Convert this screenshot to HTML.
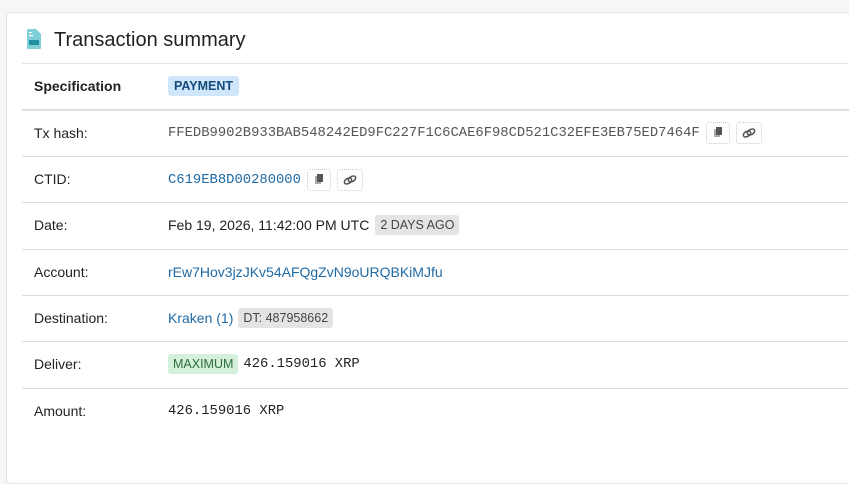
<!DOCTYPE html>
<html><head><style>
body{margin:0;background:#f5f6f8;font-family:"Liberation Sans",sans-serif;width:849px;height:466px;overflow:hidden}
.card{position:absolute;left:6px;top:12px;width:860px;height:470px;background:#fff;border:1px solid #e3e5e8;border-radius:4px}
.title{position:absolute;left:47px;top:16px;font-size:20px;color:#222}
.icon{position:absolute;left:20px;top:16px}
.row{position:absolute;left:15px;width:860px;height:46px;border-top:1px solid #dedede;font-size:14px;color:#222}
.row .l{position:absolute;left:12px;top:14px}
.row .v{position:absolute;left:146px;top:14px;white-space:nowrap;display:flex;align-items:center}
.mono{font-family:"Liberation Mono",monospace;font-size:13.85px}
.link{color:#1f6aa5}
.badge{display:inline-block;font-size:12.5px;padding:3px 5px;border-radius:3px;margin-left:6px}
.btn{display:inline-block;width:22px;height:20px;border:1px dotted #ccc;border-radius:3px;margin-left:6px;position:relative;top:0}
</style></head><body>
<div class="card">
<svg class="icon" width="14" height="20" viewBox="0 0 14 20"><path d="M1 0h8l5 5v14a1 1 0 0 1-1 1H1a1 1 0 0 1-1-1V1a1 1 0 0 1 1-1z" fill="#7fcfd9"/><rect x="2" y="3" width="3" height="1.2" fill="#fff"/><rect x="2" y="6" width="4" height="1.2" fill="#fff"/><rect x="2" y="11" width="10" height="5" fill="#1d8fa0"/></svg>
<div class="title">Transaction summary</div>
<div class="row" style="top:50px;border-top-color:#e6e6e6"><span class="l" style="font-weight:bold">Specification</span><span class="v" style="top:12px"><span class="badge" style="margin-left:0;background:#cfe6fb;color:#154a7c;font-weight:bold;padding:3px 6px">PAYMENT</span></span></div>
<div class="row" style="top:96px;border-top:2px solid #dedede"><span class="l">Tx hash:</span><span class="v" style="top:11px"><span class="mono" style="color:#555">FFEDB9902B933BAB548242ED9FC227F1C6CAE6F98CD521C32EFE3EB75ED7464F</span><span class="btn"><svg width="22" height="20"><rect x="7" y="6" width="6" height="8" fill="#aaa"/><rect x="9" y="4" width="6" height="8" fill="#555"/></svg></span><span class="btn" style="width:24px"><svg width="24" height="20"><ellipse cx="10" cy="11" rx="4" ry="2.5" transform="rotate(-30 10 11)" fill="none" stroke="#555" stroke-width="1.5"/><ellipse cx="14" cy="9" rx="4" ry="2.5" transform="rotate(-30 14 9)" fill="none" stroke="#555" stroke-width="1.5"/></svg></span></span></div>
<div class="row" style="top:143px"><span class="l">CTID:</span><span class="v" style="top:12px"><span class="mono link">C619EB8D00280000</span><span class="btn"><svg width="22" height="20"><rect x="7" y="6" width="6" height="8" fill="#aaa"/><rect x="9" y="4" width="6" height="8" fill="#555"/></svg></span><span class="btn" style="width:24px"><svg width="24" height="20"><ellipse cx="10" cy="11" rx="4" ry="2.5" transform="rotate(-30 10 11)" fill="none" stroke="#555" stroke-width="1.5"/><ellipse cx="14" cy="9" rx="4" ry="2.5" transform="rotate(-30 14 9)" fill="none" stroke="#555" stroke-width="1.5"/></svg></span></span></div>
<div class="row" style="top:189px"><span class="l">Date:</span><span class="v" style="top:12px">Feb 19, 2026, 11:42:00 PM UTC<span class="badge" style="background:#e4e4e4;color:#444">2 DAYS AGO</span></span></div>
<div class="row" style="top:236px"><span class="l">Account:</span><span class="v link">rEw7Hov3jzJKv54AFQgZvN9oURQBKiMJfu</span></div>
<div class="row" style="top:282px"><span class="l">Destination:</span><span class="v" style="top:12px"><span class="link">Kraken (1)</span><span class="badge" style="background:#e4e4e4;color:#444;margin-left:5px">DT: 487958662</span></span></div>
<div class="row" style="top:328px"><span class="l">Deliver:</span><span class="v" style="top:12px"><span class="badge" style="margin-left:0;background:#d4f0da;color:#2b6e3a">MAXIMUM</span><span class="mono" style="margin-left:5px">426.159016 XRP</span></span></div>
<div class="row" style="top:375px"><span class="l">Amount:</span><span class="v mono">426.159016 XRP</span></div>
</div>
</body></html>
